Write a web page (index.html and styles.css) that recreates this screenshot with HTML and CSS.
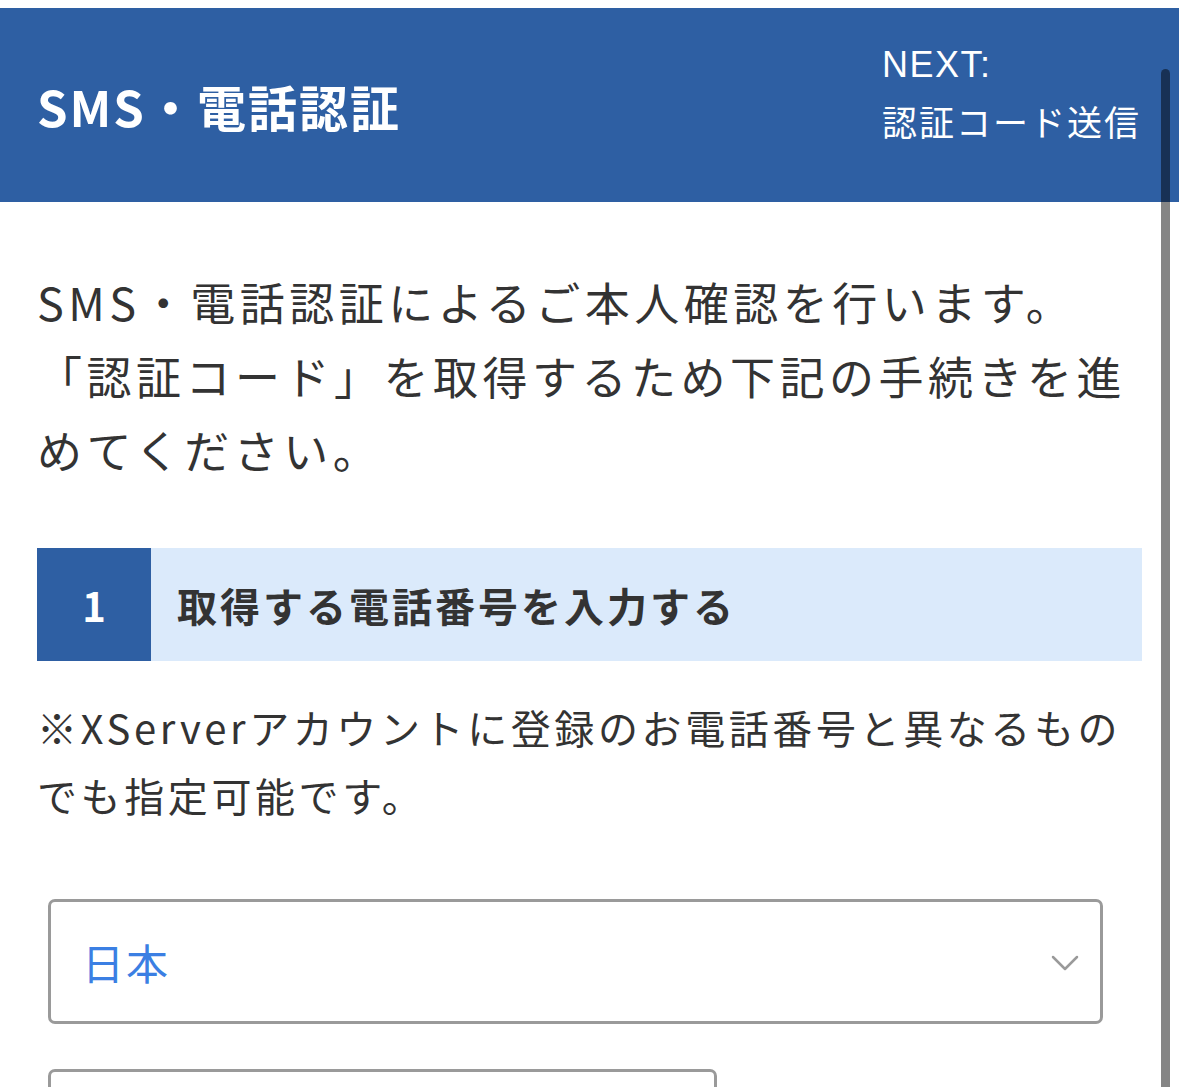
FILE: index.html
```html
<!DOCTYPE html>
<html lang="ja">
<head>
<meta charset="utf-8">
<title>SMS・電話認証</title>
<link rel="stylesheet" href="styles.css">
</head>
<body>
<header class="topbar">
  <h1 class="topbar-title">SMS・電話認証</h1>
  <div class="topbar-next">
    <div class="next-label">NEXT:</div>
    <div class="next-step">認証コード送信</div>
  </div>
</header>
<main class="content">
  <p class="intro">SMS・電話認証によるご本人確認を行います。「認証コード」を取得するため下記の手続きを進めてください。</p>
  <section class="step">
    <div class="step-head">
      <div class="step-num">1</div>
      <h2 class="step-title">取得する電話番号を入力する</h2>
    </div>
    <p class="note">※XServerアカウントに登録のお電話番号と異なるものでも指定可能です。</p>
    <div class="select">
      <span class="select-value">日本</span>
      <svg class="chevron" width="28" height="18" viewBox="0 0 28 18"><path d="M2 3 L14 15 L26 3" fill="none" stroke="#9a9a9a" stroke-width="2.5" stroke-linecap="round" stroke-linejoin="round"/></svg>
    </div>
    <div class="phone-input"></div>
  </section>
</main>
<div class="scroll-indicator"></div>
</body>
</html>
```
FILE: styles.css
```css
html, body {
  margin: 0;
  padding: 0;
}
body {
  padding-top: 8px;
  background: #ffffff;
  font-family: "Noto Sans CJK JP", "Noto Sans", sans-serif;
  color: #333333;
  overflow: hidden;
  height: 1079px;
}
.topbar {
  background: #2e5fa3;
  height: 194px;
  display: flex;
  align-items: center;
  justify-content: space-between;
  padding: 0 40px 0 37px;
  box-sizing: border-box;
  color: #ffffff;
}
.topbar-title {
  margin: 0;
  font-size: 49px;
  font-weight: 700;
  letter-spacing: 2px;
  line-height: 1;
}
.topbar-next {
  display: flex;
  flex-direction: column;
  gap: 6px;
  width: 257px;
  margin-bottom: 24px;
}
.next-label {
  font-family: "Liberation Sans", "Noto Sans", sans-serif;
  font-size: 36px;
  letter-spacing: 1.5px;
  line-height: 50px;
}
.next-step {
  font-size: 35px;
  letter-spacing: 2px;
  line-height: 50px;
  white-space: nowrap;
}
.content {
  padding: 0 37px;
}
.intro {
  margin: 63px 0 0;
  font-size: 45px;
  letter-spacing: 0.1em;
  line-height: 74px;
  color: #333333;
}
.step {
  margin-top: 61px;
}
.step-head {
  display: flex;
  height: 113px;
  background: #dbeafb;
}
.step-num {
  width: 114px;
  background: #2e5fa3;
  color: #ffffff;
  font-size: 40px;
  font-weight: 700;
  display: flex;
  align-items: center;
  justify-content: center;
}
.step-title {
  margin: 0;
  padding-left: 26px;
  display: flex;
  align-items: center;
  font-size: 40px;
  font-weight: 700;
  letter-spacing: 3px;
  color: #333333;
}
.note {
  margin: 32px 0 0;
  font-size: 40px;
  letter-spacing: 3.6px;
  line-height: 68px;
  color: #333333;
}
.select {
  margin: 70px 0 0 11px;
  width: 1055px;
  height: 125px;
  box-sizing: border-box;
  border: 3px solid #9a9a9a;
  border-radius: 7px;
  display: flex;
  align-items: center;
  justify-content: space-between;
  padding: 0 24px 0 31px;
}
.select-value {
  color: #3b7fe3;
  font-size: 42px;
  letter-spacing: 2px;
}
.chevron {
  display: block;
  width: 28px;
  height: 18px;
  margin-top: 2px;
  margin-right: -3px;
}
.phone-input {
  margin: 45px 0 0 11px;
  width: 669px;
  height: 125px;
  box-sizing: border-box;
  border: 3px solid #9a9a9a;
  border-radius: 7px;
}
.scroll-indicator {
  position: fixed;
  top: 69px;
  left: 1161px;
  width: 9px;
  height: 1100px;
  border-radius: 5px;
  background: rgba(0, 0, 0, 0.48);
}
```
